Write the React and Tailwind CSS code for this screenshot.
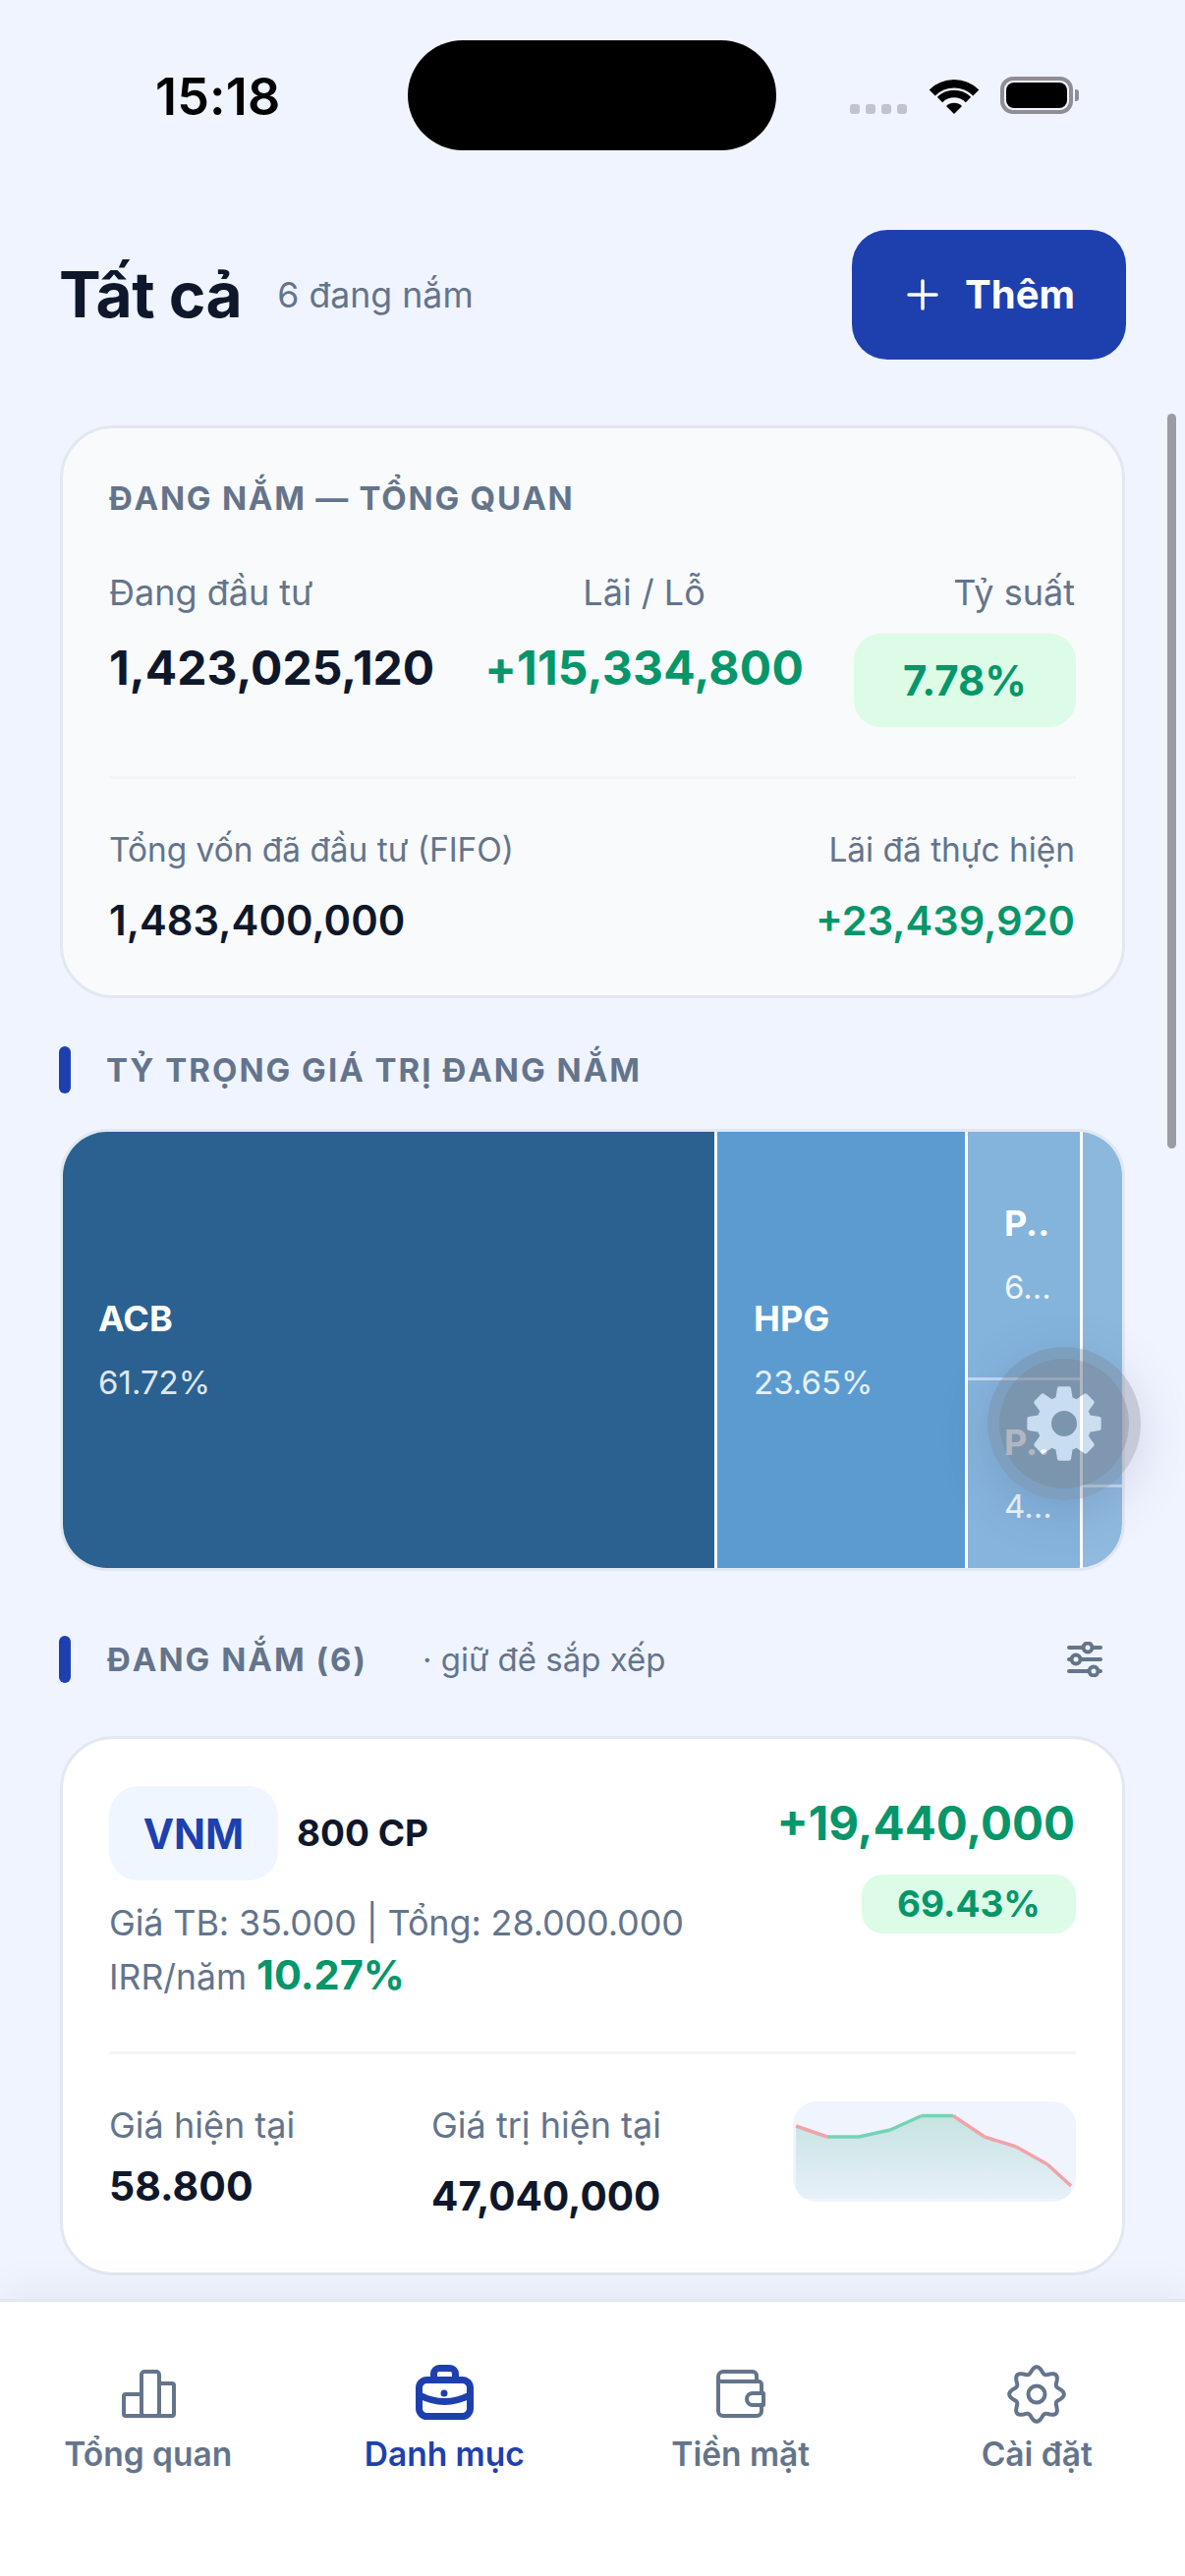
const gearPath = (() => {
  const pts = [];
  const R = 36, r = 26;
  for (let i = 0; i < 8; i++) {
    const a = (i * Math.PI) / 4 - Math.PI / 2;
    const d = Math.PI / 180;
    [[r, -15], [R, -8], [R, 8], [r, 15]].forEach(([rad, off]) => {
      pts.push([40 + rad * Math.cos(a + off * d), 40 + rad * Math.sin(a + off * d)]);
    });
  }
  const poly = "M" + pts.map((p) => p[0].toFixed(2) + " " + p[1].toFixed(2)).join("L") + "Z";
  return poly + " M55 40a15 15 0 1 0 -30 0a15 15 0 1 0 30 0Z";
})();

const wavyGear = (() => {
  const p = [];
  for (let i = 0; i < 240; i++) {
    const t = (i / 240) * Math.PI * 2;
    const rad = 24.7 + 3.1 * Math.cos(8 * t);
    p.push((36 + rad * Math.sin(t)).toFixed(2) + " " + (36 - rad * Math.cos(t)).toFixed(2));
  }
  return "M" + p.join("L") + "Z";
})();

function ChartIcon() {
  return (
    <svg width="72" height="72" viewBox="0 0 72 72" fill="none" stroke="#64748b" strokeWidth="4" strokeLinejoin="round">
      <path d="M29 36H13a2 2 0 0 0-2 2V56a2 2 0 0 0 2 2H60a2 2 0 0 0 2-2V27a2 2 0 0 0-2-2H47" />
      <rect x="29" y="13" width="18" height="45" rx="3" />
    </svg>
  );
}
function BriefcaseIcon() {
  return (
    <svg width="72" height="72" viewBox="0 0 72 72" fill="none" stroke="#1e40af" strokeWidth="7" strokeLinecap="round" strokeLinejoin="round">
      <rect x="10.500" y="21.500" width="52" height="37" rx="8" />
      <path d="M25.500 21V15a5.500 5.500 0 0 1 5.500-5.500H42a5.500 5.500 0 0 1 5.500 5.500V21" />
      <path d="M11 37Q36.500 50 62 37" />
      <circle cx="36" cy="35" r="3.500" fill="#1e40af" stroke="none" />
    </svg>
  );
}
function WalletIcon() {
  return (
    <svg width="72" height="72" viewBox="0 0 72 72" fill="none" stroke="#64748b" strokeWidth="4" strokeLinejoin="round">
      <path d="M13 23V18a5 5 0 0 1 5-5H48a4 4 0 0 1 4 4V23" />
      <path d="M13 20V53a5 5 0 0 0 5 5H52a5 5 0 0 0 5-5V26a3 3 0 0 0-3-3H16a3 3 0 0 1-3-3" />
      <path d="M59 35H48a6 6 0 0 0 0 12H59Z" fill="#fff" />
    </svg>
  );
}
function CogIcon() {
  return (
    <svg width="72" height="72" viewBox="0 0 72 72" fill="none" stroke="#64748b" strokeWidth="4" strokeLinejoin="round">
      <path d={wavyGear} />
      <circle cx="36" cy="36" r="8.500" />
    </svg>
  );
}

function NavItem({ icon, label, active }) {
  return (
    <div className="flex flex-col items-center">
      {icon}
      <span className={active ? "text-[33.5px] leading-[48px] font-semibold text-[#1e40af] mt-[1px]" : "text-[33.5px] leading-[48px] font-semibold text-[#64748b] mt-[1px]"}>
        {label}
      </span>
    </div>
  );
}

function SectionBar({ children }) {
  return (
    <div className="flex items-center h-[48px] gap-[37px]">
      <div className="w-[12px] h-[48px] rounded-full bg-[#1e40af]" />
      {children}
    </div>
  );
}

function Spark() {
  const pts = [[3, 25], [35, 36], [67, 36], [99, 29], [131, 14.500], [163, 14.500], [195, 36], [227, 46], [259, 64], [283, 86]];
  const seg = (a, b) => `${pts[a][0]},${pts[a][1]} ${pts[b][0]},${pts[b][1]}`;
  const area = "M" + pts.map((p) => p.join(" ")).join("L") + "L283 99L3 99Z";
  const colors = ["#f2a3a8", "#74d3b6", "#74d3b6", "#74d3b6", "#74d3b6", "#f2a3a8", "#f2a3a8", "#f2a3a8", "#f2a3a8"];
  return (
    <div className="w-[288px] h-[102px] -mr-[1px] rounded-[24px] bg-[#eff4fd] overflow-hidden">
      <svg width="288" height="102" viewBox="0 0 288 102">
        <defs>
          <linearGradient id="sparkfill" x1="0" y1="0" x2="0" y2="1">
            <stop offset="0" stopColor="#c6e3e1" />
            <stop offset="1" stopColor="#e8f0fa" />
          </linearGradient>
        </defs>
        <path d={area} fill="url(#sparkfill)" />
        {colors.map((c, i) => (
          <polyline key={i} points={seg(i, i + 1)} fill="none" stroke={c} strokeWidth="3.500" />
        ))}
      </svg>
    </div>
  );
}

export default function App() {
  return (
    <div className="relative w-[1206px] h-[2622px] overflow-hidden flex flex-col bg-[#f0f4ff] font-['Inter',sans-serif] text-[#0f172a]">
      {/* status bar */}
      <div className="relative h-[234px] shrink-0 flex justify-between items-start">
        <div className="ml-[158px] mt-[71px] text-[52px] leading-[56px] font-semibold text-black tracking-[0.2px]">15:18</div>
        <div className="absolute left-[415px] top-[41px] w-[375px] h-[112px] rounded-[56px] bg-black" />
        <div className="mr-[114px] mt-[78px] flex items-start">
          <div className="flex gap-[6px] mt-[28px] mr-[22px]">
            <div className="w-[10px] h-[10px] rounded-[3px] bg-[#c1c4cd]" />
            <div className="w-[10px] h-[10px] rounded-[3px] bg-[#c1c4cd]" />
            <div className="w-[10px] h-[10px] rounded-[3px] bg-[#c1c4cd]" />
            <div className="w-[10px] h-[10px] rounded-[3px] bg-[#c1c4cd]" />
          </div>
          <svg width="52" height="38" viewBox="-26 -38 52 38" className="mr-[21px]">
            <path d="M-22.300 -21.500A31.500 31.500 0 0 1 22.300 -21.500" fill="none" stroke="#000" strokeWidth="8.500" />
            <path d="M-14.500 -14.500A20.500 20.500 0 0 1 14.500 -14.500" fill="none" stroke="#000" strokeWidth="7.500" />
            <path d="M0 0L-8 -8A11.300 11.300 0 0 1 8 -8Z" fill="#000" />
          </svg>
          <div className="relative w-[74px] h-[38px] rounded-[13px] border-[4px] border-[#8e8e93] p-[2px]">
            <div className="w-full h-full rounded-[8px] bg-black" />
            <div className="absolute -right-[10px] top-[9px] w-[4px] h-[12px] rounded-r-[3px] bg-[#8e8e93]" />
          </div>
        </div>
      </div>

      {/* main */}
      <div className="flex-1 min-h-0 overflow-hidden px-[60px]">
        <div className="flex items-center justify-between h-[132px]">
          <div className="flex items-center gap-[36px]">
            <span className="text-[64px] leading-[80px] font-bold text-[#0f172a] tracking-[-0.5px]">Tất cả</span>
            <span className="text-[35.7px] leading-[50px] text-[#64748b]">6 đang nắm</span>
          </div>
          <div className="w-[279px] h-[132px] rounded-[36px] bg-[#1e40af] flex items-center justify-center gap-[27px] pl-[4px]">
            <svg width="32" height="32" viewBox="0 0 32 32" fill="none" stroke="#fff" strokeWidth="3.500" strokeLinecap="round">
              <path d="M16 2V30M2 16H30" />
            </svg>
            <span className="text-[40px] leading-[50px] font-bold text-white">Thêm</span>
          </div>
        </div>

        {/* summary card */}
        <div className="mt-[67px] mx-[1px] rounded-[54px] border-[3px] border-[#e2e8f0] bg-[#f8fafc] pl-[47px] pr-[48px] pt-[49px] pb-[46px]">
          <div className="text-[33px] leading-[44px] font-bold tracking-[1.75px] text-[#64748b]">ĐANG NẮM — TỔNG QUAN</div>
          <div className="mt-[49px] flex justify-between">
            <div>
              <div className="text-[36px] leading-[50px] text-[#64748b]">Đang đầu tư</div>
              <div className="mt-[17px] text-[48px] leading-[70px] font-bold text-[#0f172a]">1,423,025,120</div>
            </div>
            <div className="flex flex-col items-center">
              <div className="text-[36px] leading-[50px] text-[#64748b]">Lãi / Lỗ</div>
              <div className="mt-[17px] text-[48px] leading-[70px] font-bold text-[#059669] tracking-[0.25px]">+115,334,800</div>
            </div>
            <div className="flex flex-col items-end">
              <div className="text-[36px] leading-[50px] text-[#64748b]">Tỷ suất</div>
              <div className="mt-[17px] -mr-[1px] w-[226px] h-[95px] rounded-[27px] bg-[#dcfce7] flex items-center justify-center text-[42px] font-bold text-[#059669]">7.78%</div>
            </div>
          </div>
          <div className="mt-[50px] -mr-[1px] h-[3px] bg-[#f1f5f9]" />
          <div className="mt-[49px] flex justify-between">
            <div>
              <div className="text-[33.4px] leading-[46px] text-[#64748b]">Tổng vốn đã đầu tư (FIFO)</div>
              <div className="mt-[19px] text-[41.8px] leading-[60px] font-semibold text-[#0f172a]">1,483,400,000</div>
            </div>
            <div className="flex flex-col items-end">
              <div className="text-[33.4px] leading-[46px] text-[#64748b]">Lãi đã thực hiện</div>
              <div className="mt-[19px] text-[41.6px] leading-[60px] font-semibold text-[#059669]">+23,439,920</div>
            </div>
          </div>
        </div>

        {/* allocation */}
        <div className="mt-[49px]">
          <SectionBar>
            <span className="text-[33px] leading-[44px] font-bold tracking-[2px] text-[#64748b] -ml-[1px]">TỶ TRỌNG GIÁ TRỊ ĐANG NẮM</span>
          </SectionBar>
        </div>
        <div className="mt-[36px] mx-[1px] h-[450px] rounded-[48px] border-[3px] border-[#e2e8f0] overflow-hidden flex">
          <div className="w-[666px] shrink-0 border-r-[3px] border-white bg-[#2a6190] pl-[36px] flex flex-col justify-center text-white">
            <div className="text-[36px] leading-[44px] font-bold">ACB</div>
            <div className="mt-[21px] text-[33px] leading-[44px] text-white/85">61.72%</div>
          </div>
          <div className="w-[255px] shrink-0 border-r-[3px] border-white bg-[#5b9bd0] pl-[37px] flex flex-col justify-center text-white">
            <div className="text-[36px] leading-[44px] font-bold">HPG</div>
            <div className="mt-[21px] text-[33px] leading-[44px] text-white/85">23.65%</div>
          </div>
          <div className="w-[117px] shrink-0 border-r-[3px] border-white flex flex-col">
            <div className="h-[253px] border-b-[3px] border-white/50 bg-[#84b3dc] pl-[37px] flex flex-col justify-center text-white">
              <div className="text-[36px] leading-[44px] font-bold">P..</div>
              <div className="mt-[21px] text-[33px] leading-[44px] text-white/85">6...</div>
            </div>
            <div className="flex-1 bg-[#86b4dc] pl-[37px] flex flex-col justify-center text-white">
              <div className="text-[36px] leading-[44px] font-bold">P..</div>
              <div className="mt-[21px] text-[33px] leading-[44px] text-white/85">4...</div>
            </div>
          </div>
          <div className="flex-1 flex flex-col">
            <div className="h-[362px] border-b-[3px] border-white/50 bg-[#8cb8de]" />
            <div className="flex-1 bg-[#90bae0]" />
          </div>
        </div>

        {/* holdings */}
        <div className="mt-[66px] flex items-center justify-between">
          <SectionBar>
            <div className="flex items-center gap-[56px]">
              <span className="text-[33px] leading-[44px] font-bold tracking-[2px] text-[#64748b]">ĐANG NẮM (6)</span>
              <span className="text-[33px] leading-[44px] text-[#64748b]">· giữ để sắp xếp</span>
            </div>
          </SectionBar>
          <svg width="42" height="36" viewBox="0 0 42 36" className="mr-[21px]" fill="#f0f4ff" stroke="#64748b" strokeWidth="4" strokeLinecap="round">
            <path d="M5 6H37M5 18H37M5 30H37" fill="none" />
            <circle cx="24" cy="6" r="4.500" />
            <circle cx="12" cy="18" r="4.500" />
            <circle cx="30" cy="30" r="4.500" />
          </svg>
        </div>

        <div className="mt-[54px] mx-[1px] rounded-[54px] border-[3px] border-[#e2e8f0] bg-white pl-[47px] pr-[48px] pt-[48px] pb-[47px]">
          <div className="flex justify-between">
            <div>
              <div className="flex items-center gap-[19px]">
                <div className="w-[172px] h-[96px] rounded-[30px] bg-[#eff6ff] flex items-center justify-center text-[42px] font-bold text-[#1e40af]">VNM</div>
                <span className="text-[37px] font-bold text-[#0f172a]">800 CP</span>
              </div>
              <div className="mt-[18px] text-[36px] leading-[50px] text-[#64748b] tracking-[-0.15px]">Giá TB: 35.000 | Tổng: 28.000.000</div>
              <div className="mt-[1px] text-[35.5px] leading-[54px] text-[#64748b]">
                IRR/năm <span className="text-[41.5px] font-bold text-[#059669]">10.27%</span>
              </div>
            </div>
            <div className="flex flex-col items-end">
              <div className="mt-[3px] text-[47.5px] leading-[70px] font-bold text-[#059669]">+19,440,000</div>
              <div className="mt-[17px] -mr-[1px] w-[218px] h-[60px] rounded-[21px] bg-[#dcfce7] flex items-center justify-center text-[37px] font-bold text-[#059669]">69.43%</div>
            </div>
          </div>
          <div className="mt-[48px] -mr-[1px] h-[3px] bg-[#f1f5f9]" />
          <div className="mt-[48px] flex justify-between">
            <div className="flex">
              <div className="w-[328px]">
                <div className="mt-[1px] text-[36px] leading-[46px] text-[#64748b]">Giá hiện tại</div>
                <div className="mt-[9px] text-[41px] leading-[60px] font-bold text-[#0f172a]">58.800</div>
              </div>
              <div>
                <div className="mt-[1px] text-[36px] leading-[46px] text-[#64748b]">Giá trị hiện tại</div>
                <div className="mt-[20px] text-[40.5px] leading-[60px] font-bold text-[#0f172a]">47,040,000</div>
              </div>
            </div>
            <Spark />
          </div>
        </div>
      </div>

      {/* bottom nav */}
      <div className="relative z-10 h-[282px] shrink-0 border-t-[3px] border-[#e2e8f0] bg-white shadow-[0_-10px_40px_rgba(15,23,42,0.05)] grid grid-cols-4 pt-[58px] content-start">
        <NavItem icon={<ChartIcon />} label="Tổng quan" />
        <NavItem icon={<BriefcaseIcon />} label="Danh mục" active />
        <NavItem icon={<WalletIcon />} label="Tiền mặt" />
        <NavItem icon={<CogIcon />} label="Cài đặt" />
      </div>

      {/* scrollbar */}
      <div className="absolute left-[1188px] top-[421px] w-[9px] h-[748px] rounded-full bg-[#9a9ca3]" />

      {/* floating settings button */}
      <div className="absolute left-[1005px] top-[1371px] w-[156px] h-[156px] rounded-full bg-[#6f7785]/60 opacity-55 shadow-[0_12px_48px_rgba(30,41,90,0.25)] flex items-center justify-center">
        <div className="w-[132px] h-[132px] rounded-full bg-[#757d8b] flex items-center justify-center">
          <svg width="80" height="80" viewBox="0 0 80 80">
            <path d={gearPath} fill="#fff" fillRule="evenodd" stroke="#fff" strokeWidth="4" strokeLinejoin="round" />
          </svg>
        </div>
      </div>
    </div>
  );
}
